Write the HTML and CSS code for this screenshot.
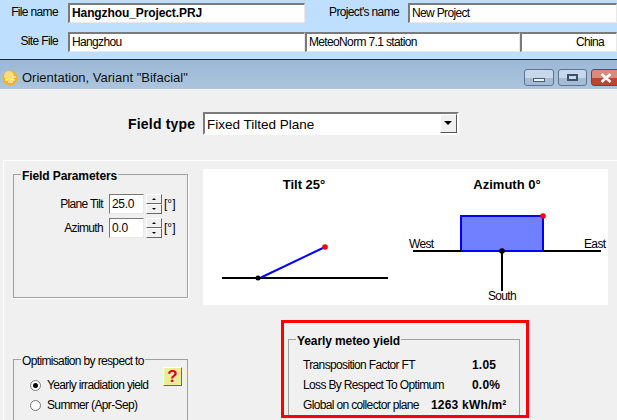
FILE: index.html
```html
<!DOCTYPE html>
<html lang="en">
<head>
  <meta charset="UTF-8">
  <title>Orientation, Variant "Bifacial"</title>
  <link rel="stylesheet" href="styles.css">
</head>
<body>
  <div class="project-bar">
    <div class="project-row">
      <label class="file-label">File name</label>
      <div class="field file-field bold">Hangzhou_Project.PRJ</div>
      <label class="name-label">Project's name</label>
      <div class="field name-field">New Project</div>
    </div>
    <div class="project-row site-row">
      <label class="file-label">Site File</label>
      <div class="field file-field">Hangzhou</div>
      <div class="field station-field">MeteoNorm 7.1 station</div>
      <div class="field country-field">China</div>
    </div>
  </div>

  <div class="title-bar">
    <svg class="app-icon" width="16" height="16" viewBox="0 0 16 16">
      <circle cx="8" cy="8" r="7.500" fill="#f2b31e"/>
      <circle cx="7" cy="6" r="5" fill="#fbdc74"/>
      <path d="M3 10h3M8 10h5M10 7h4M6 12h5" stroke="#fff" stroke-width="1"/>
    </svg>
    <span class="title-text">Orientation, Variant "Bifacial"</span>
    <div class="win-buttons">
      <div class="win-btn min-btn"><span class="min-glyph"></span></div>
      <div class="win-btn"><span class="max-glyph"></span></div>
      <div class="win-btn close-btn">
        <svg width="14" height="10" viewBox="0 0 14 10"><path d="M2.500 1l9 8M11.500 1l-9 8" stroke="#fff" stroke-width="2.600"/></svg>
      </div>
    </div>
  </div>

  <div class="dialog">
    <div class="type-row">
      <span class="type-label">Field type</span>
      <div class="select">
        <span class="select-text">Fixed Tilted Plane</span>
        <span class="select-arrow"></span>
      </div>
    </div>

    <div class="panel">
      <div class="left-col">
        <fieldset class="group params">
          <legend class="bold">Field Parameters</legend>
          <div class="param-row">
            <label>Plane Tilt</label>
            <div class="spin-input">25.0</div>
            <div class="spin"><span class="up"></span><span class="down"></span></div>
            <span class="unit">[°]</span>
          </div>
          <div class="param-row">
            <label>Azimuth</label>
            <div class="spin-input">0.0</div>
            <div class="spin"><span class="up"></span><span class="down"></span></div>
            <span class="unit">[°]</span>
          </div>
        </fieldset>

        <fieldset class="group optim">
          <legend>Optimisation by respect to</legend>
          <div class="help-btn"><span>?</span></div>
          <div class="radio-row"><span class="radio checked"></span>Yearly irradiation yield</div>
          <div class="radio-row"><span class="radio"></span>Summer (Apr-Sep)</div>
        </fieldset>
      </div>

      <div class="right-col">
        <div class="canvas">
          <svg width="405" height="136" viewBox="0 0 405 136">
            <text class="plot-title" x="101" y="20" text-anchor="middle">Tilt 25°</text>
            <path d="M19 109H185" stroke="#000" stroke-width="2"/>
            <path d="M58 108.500L122 78" stroke="#00f" stroke-width="2"/>
            <circle cx="55" cy="109" r="2.500" fill="#000"/>
            <circle cx="122" cy="78" r="2.800" fill="#f00"/>

            <text class="plot-title" x="304" y="20" text-anchor="middle">Azimuth 0°</text>
            <rect x="258" y="47" width="82" height="35" fill="#7080ff" stroke="#00f" stroke-width="2"/>
            <path d="M210 82H258M340 82H398" stroke="#000" stroke-width="2"/>
            <path d="M299 82V122" stroke="#000" stroke-width="2"/>
            <circle cx="299" cy="82" r="2.800" fill="#000"/>
            <circle cx="340" cy="47" r="2.800" fill="#f00"/>
            <text class="plot-label" x="206" y="79">West</text>
            <text class="plot-label" x="381" y="79">East</text>
            <text class="plot-label" x="299" y="131" text-anchor="middle">South</text>
          </svg>
        </div>

        <div class="highlight">
          <fieldset class="group yield">
            <legend class="bold">Yearly meteo yield</legend>
            <div class="yield-row"><span>Transposition Factor FT</span><b class="val-a">1.05</b></div>
            <div class="yield-row"><span>Loss By Respect To Optimum</span><b class="val-a">0.0%</b></div>
            <div class="yield-row"><span>Global on collector plane</span><b class="val-b">1263 kWh/m²</b></div>
          </fieldset>
        </div>
      </div>
    </div>
  </div>
</body>
</html>
```

FILE: styles.css
```css
html, body {
  margin: 0;
  padding: 0;
  height: 420px;
  overflow: hidden;
  font-family: "Liberation Sans", Arial, sans-serif;
  font-size: 12px;
  letter-spacing: -0.65px;
  color: #000;
  background: #f0f0f0;
}
.bold {
  font-weight: bold;
  font-size: 12px;
  letter-spacing: -0.1px;
}

/* project bar */
.project-bar {
  height: 60px;
  box-sizing: border-box;
  background: #bfdfff;
  border-bottom: 1px solid #1c2a3a;
  padding-top: 3px;
}
.project-row {
  display: flex;
  height: 20px;
  align-items: center;
}
.site-row {
  margin-top: 9px;
}
.file-label {
  width: 58px;
  text-align: right;
  margin-right: 10px;
  padding-bottom: 2px;
}
.name-label {
  width: 94px;
  text-align: right;
  margin-right: 9px;
  padding-bottom: 2px;
}
.field {
  height: 20px;
  line-height: 16px;
  box-sizing: border-box;
  background: #fff;
  border: 1px solid;
  border-color: #7a7a7a #e8e8e8 #e8e8e8 #7a7a7a;
  border-top-width: 2px;
  border-left-width: 2px;
  padding-left: 2px;
  white-space: nowrap;
}
.file-field {
  width: 237px;
}
.name-field {
  width: 209px;
}
.station-field {
  width: 215px;
}
.country-field {
  width: 97px;
  text-align: right;
  padding-right: 12px;
}

/* title bar */
.title-bar {
  height: 29px;
  box-sizing: border-box;
  display: flex;
  align-items: center;
  background: linear-gradient(#9ab8d6, #adc5de);
  padding: 6px 0 0 2px;
}
.app-icon {
  margin-right: 4px;
}
.title-text {
  font-size: 13px;
  letter-spacing: 0;
  color: #101010;
}
.win-buttons {
  margin-left: auto;
  display: flex;
  gap: 4px;
}
.win-btn {
  width: 29px;
  height: 17px;
  box-sizing: border-box;
  border: 1px solid #5d7390;
  border-radius: 3px;
  background: linear-gradient(#c6d8ea 50%, #a4bcd6 50%);
  display: flex;
  align-items: center;
  justify-content: center;
}
.min-btn {
  width: 30px;
}
.min-glyph {
  width: 10px;
  height: 2px;
  margin-top: 5px;
  background: #eef2f6;
  border: 1px solid #4a5d78;
}
.max-glyph {
  width: 7px;
  height: 3px;
  background: #c6d8ea;
  border: 2px solid #3f5068;
}
.close-btn {
  margin-right: -3px;
  border-color: #8d3a2e;
  background: linear-gradient(#d98a7a 50%, #bb4432 50%);
}

/* dialog */
.dialog {
  height: 331px;
  overflow: hidden;
}
.type-row {
  display: flex;
  align-items: center;
  height: 23px;
  padding-top: 23px;
  padding-left: 128px;
}
.type-label {
  font-size: 14px;
  font-weight: bold;
  letter-spacing: 0.2px;
  width: 75px;
}
.select {
  width: 256px;
  height: 23px;
  box-sizing: border-box;
  display: flex;
  align-items: center;
  justify-content: space-between;
  background: #fff;
  border: 2px solid;
  border-color: #7a7a7a #fff #fff #7a7a7a;
  padding-left: 2px;
}
.select-text {
  font-size: 13.5px;
  letter-spacing: 0;
  padding-top: 1px;
}
.select-arrow {
  width: 17px;
  height: 19px;
  box-sizing: border-box;
  background: #f0f0f0;
  border: 1px solid;
  border-color: #fff #555 #555 #fff;
  position: relative;
}
.select-arrow::after {
  content: "";
  position: absolute;
  left: 3px;
  top: 6px;
  border: 4px solid transparent;
  border-top: 4px solid #000;
  border-bottom: none;
}

/* main panel */
.panel {
  display: flex;
  margin: 25px 0 0 3px;
  padding-top: 4px;
  border-top: 1px solid #fff;
  border-left: 1px solid #fff;
  height: 260px;
}
.left-col {
  width: 199px;
  box-sizing: border-box;
  padding-left: 9px;
  flex-shrink: 0;
}
.group {
  margin: 0;
  padding: 0;
  border: 1px solid #a0a0a0;
  box-sizing: border-box;
  min-width: 0;
}
.group legend {
  padding: 4px 1px 0;
  margin-left: 7px;
  line-height: 14px;
}
.params {
  width: 175px;
  height: 133px;
  padding-top: 10px;
  box-shadow: 1px 1px 0 #fff;
}
.param-row {
  display: flex;
  align-items: center;
  height: 21px;
  margin-bottom: 3px;
}
.param-row label {
  width: 89px;
  margin-right: 6px;
  text-align: right;
}
.spin-input {
  width: 35px;
  height: 20px;
  line-height: 18px;
  box-sizing: border-box;
  background: #fff;
  border: 1px solid;
  border-color: #7a7a7a #e8e8e8 #e8e8e8 #7a7a7a;
  padding-left: 2px;
  margin-right: 2px;
  letter-spacing: -0.3px;
}
.spin {
  width: 16px;
  height: 20px;
  display: flex;
  flex-direction: column;
  margin-right: 2px;
}
.spin span {
  flex: 1;
  background: #f0f0f0;
  border: 1px solid;
  border-color: #fff #666 #666 #fff;
  position: relative;
}
.spin span::after {
  content: "";
  position: absolute;
  left: 5px;
  top: 3px;
  border: 2px solid transparent;
}
.spin .up::after {
  border-bottom-color: #000;
  border-top: none;
}
.spin .down::after {
  border-top-color: #000;
  border-bottom: none;
}
.unit {
  letter-spacing: 0;
}
.optim {
  position: relative;
  width: 175px;
  height: 90px;
  margin-top: 52px;
  padding-top: 7px;
}
.help-btn {
  position: absolute;
  right: 5px;
  top: -1px;
  width: 19px;
  height: 19px;
  box-sizing: border-box;
  border: 1px solid;
  border-color: #fff #666 #666 #fff;
  background: repeating-conic-gradient(#ffff00 0 25%, #f2f2a0 0 50%) 0 0 / 2px 2px;
  text-align: center;
}
.help-btn span {
  font-size: 17px;
  font-weight: bold;
  line-height: 17px;
  letter-spacing: 0;
  color: #e00000;
}
.radio-row {
  display: flex;
  align-items: center;
  height: 20px;
  padding-left: 16px;
}
.radio {
  width: 11px;
  height: 11px;
  box-sizing: border-box;
  border-radius: 50%;
  border: 1px solid #777;
  background: #fff;
  margin-right: 6px;
  display: flex;
  align-items: center;
  justify-content: center;
}
.radio.checked::after {
  content: "";
  width: 5px;
  height: 5px;
  border-radius: 50%;
  background: #000;
}

/* right side */
.right-col {
  flex: 1;
  padding-top: 4px;
}
.canvas {
  width: 405px;
  height: 136px;
  background: #fff;
}
.canvas svg {
  display: block;
}
.plot-title {
  font-size: 13px;
  font-weight: bold;
  letter-spacing: 0;
}
.plot-label {
  font-size: 12px;
}
.highlight {
  width: 248px;
  height: 98px;
  box-sizing: border-box;
  margin: 15px 0 0 78px;
  border: 3px solid #f00;
  padding: 7px 0 0 4px;
  overflow: hidden;
}
.yield {
  width: 232px;
  height: 90px;
  padding-top: 7px;
}
.yield-row {
  display: flex;
  align-items: center;
  height: 20px;
  padding-left: 14px;
}
.yield-row span {
  width: 169px;
}
.yield-row b {
  font-size: 12px;
  letter-spacing: 0.2px;
}
.val-b {
  margin-left: -41px;
  white-space: nowrap;
}
```
